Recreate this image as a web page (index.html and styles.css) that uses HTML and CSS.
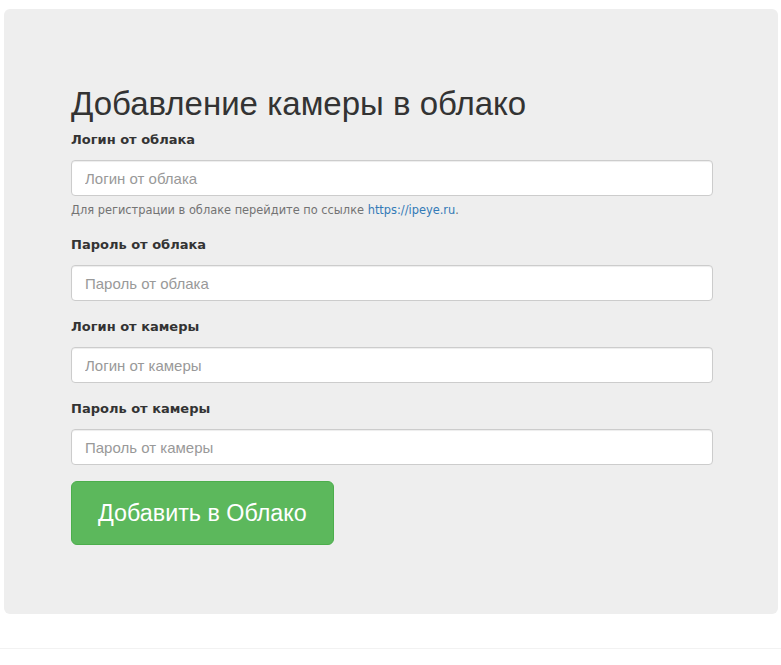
FILE: index.html
```html
<!DOCTYPE html>
<html lang="ru">

<head>
    <meta charset="utf-8">
    <meta name="viewport" content="width=device-width, initial-scale=1.0">
    <title>Добавление камеры в облако</title>

    <link rel="stylesheet" href="styles.css">

</head>

<body>
    <div class="jumbotron">
        <h1>Добавление камеры в облако</h1>

        <form class="cloud_form">
            <div class="form_group">
                <label for="cloud_login">Логин от облака</label>
                <input type="text" id="cloud_login" placeholder="Логин от облака">
                <p class="help">Для регистрации в облаке перейдите по ссылке <a href="#">https://ipeye.ru</a>.</p>
            </div>

            <div class="form_group">
                <label for="cloud_pass">Пароль от облака</label>
                <input type="password" id="cloud_pass" placeholder="Пароль от облака">
            </div>

            <div class="form_group">
                <label for="cam_login">Логин от камеры</label>
                <input type="text" id="cam_login" placeholder="Логин от камеры">
            </div>

            <div class="form_group">
                <label for="cam_pass">Пароль от камеры</label>
                <input type="password" id="cam_pass" placeholder="Пароль от камеры">
            </div>

            <button type="submit" class="btn_add">Добавить в Облако</button>
        </form>
    </div>

    <footer></footer>
</body>

</html>
```

FILE: styles.css
```css
body {
    font-family: "Liberation Sans", Arial, sans-serif;
    background-color: #fff;
    color: #333;
    margin: 0;
}

.jumbotron {
    background-color: #eee;
    border-radius: 6px;
    margin: 9px 3px 0 4px;
    padding: 77px 65px 69px 67px;
}

h1 {
    font-size: 33px;
    font-weight: normal;
    line-height: 1.1;
    margin: 0 0 8px 0;
}

.form_group {
    margin-bottom: 16px;
}

label {
    display: block;
    font-family: "DejaVu Sans", Verdana, sans-serif;
    font-size: 13px;
    font-weight: bold;
    line-height: 20px;
    margin-bottom: 10px;
    color: #333;
}

input {
    display: block;
    box-sizing: border-box;
    width: 100%;
    height: 36px;
    padding: 6px 13px;
    font-family: "Liberation Sans", Arial, sans-serif;
    font-size: 15px;
    color: #555;
    background-color: #fff;
    border: 1px solid #ccc;
    border-radius: 4px;
    box-shadow: inset 0 1px 1px rgba(0, 0, 0, 0.075);
}

input::placeholder {
    color: #999;
}

.help {
    font-family: "DejaVu Sans", Verdana, sans-serif;
    font-size: 11.4px;
    line-height: 18px;
    margin: 5px 0 0 0;
    color: #737373;
}

.help a {
    color: #337ab7;
    text-decoration: none;
}

.btn_add {
    display: block;
    height: 64px;
    padding: 0 26px;
    font-family: "Liberation Sans", Arial, sans-serif;
    font-size: 23.3px;
    color: #fff;
    background-color: #5cb85c;
    border: 1px solid #4cae4c;
    border-radius: 6px;
    cursor: pointer;
}

footer {
    margin-top: 34px;
    border-top: 1px solid #f2f2f2;
    height: 16px;
}
```
